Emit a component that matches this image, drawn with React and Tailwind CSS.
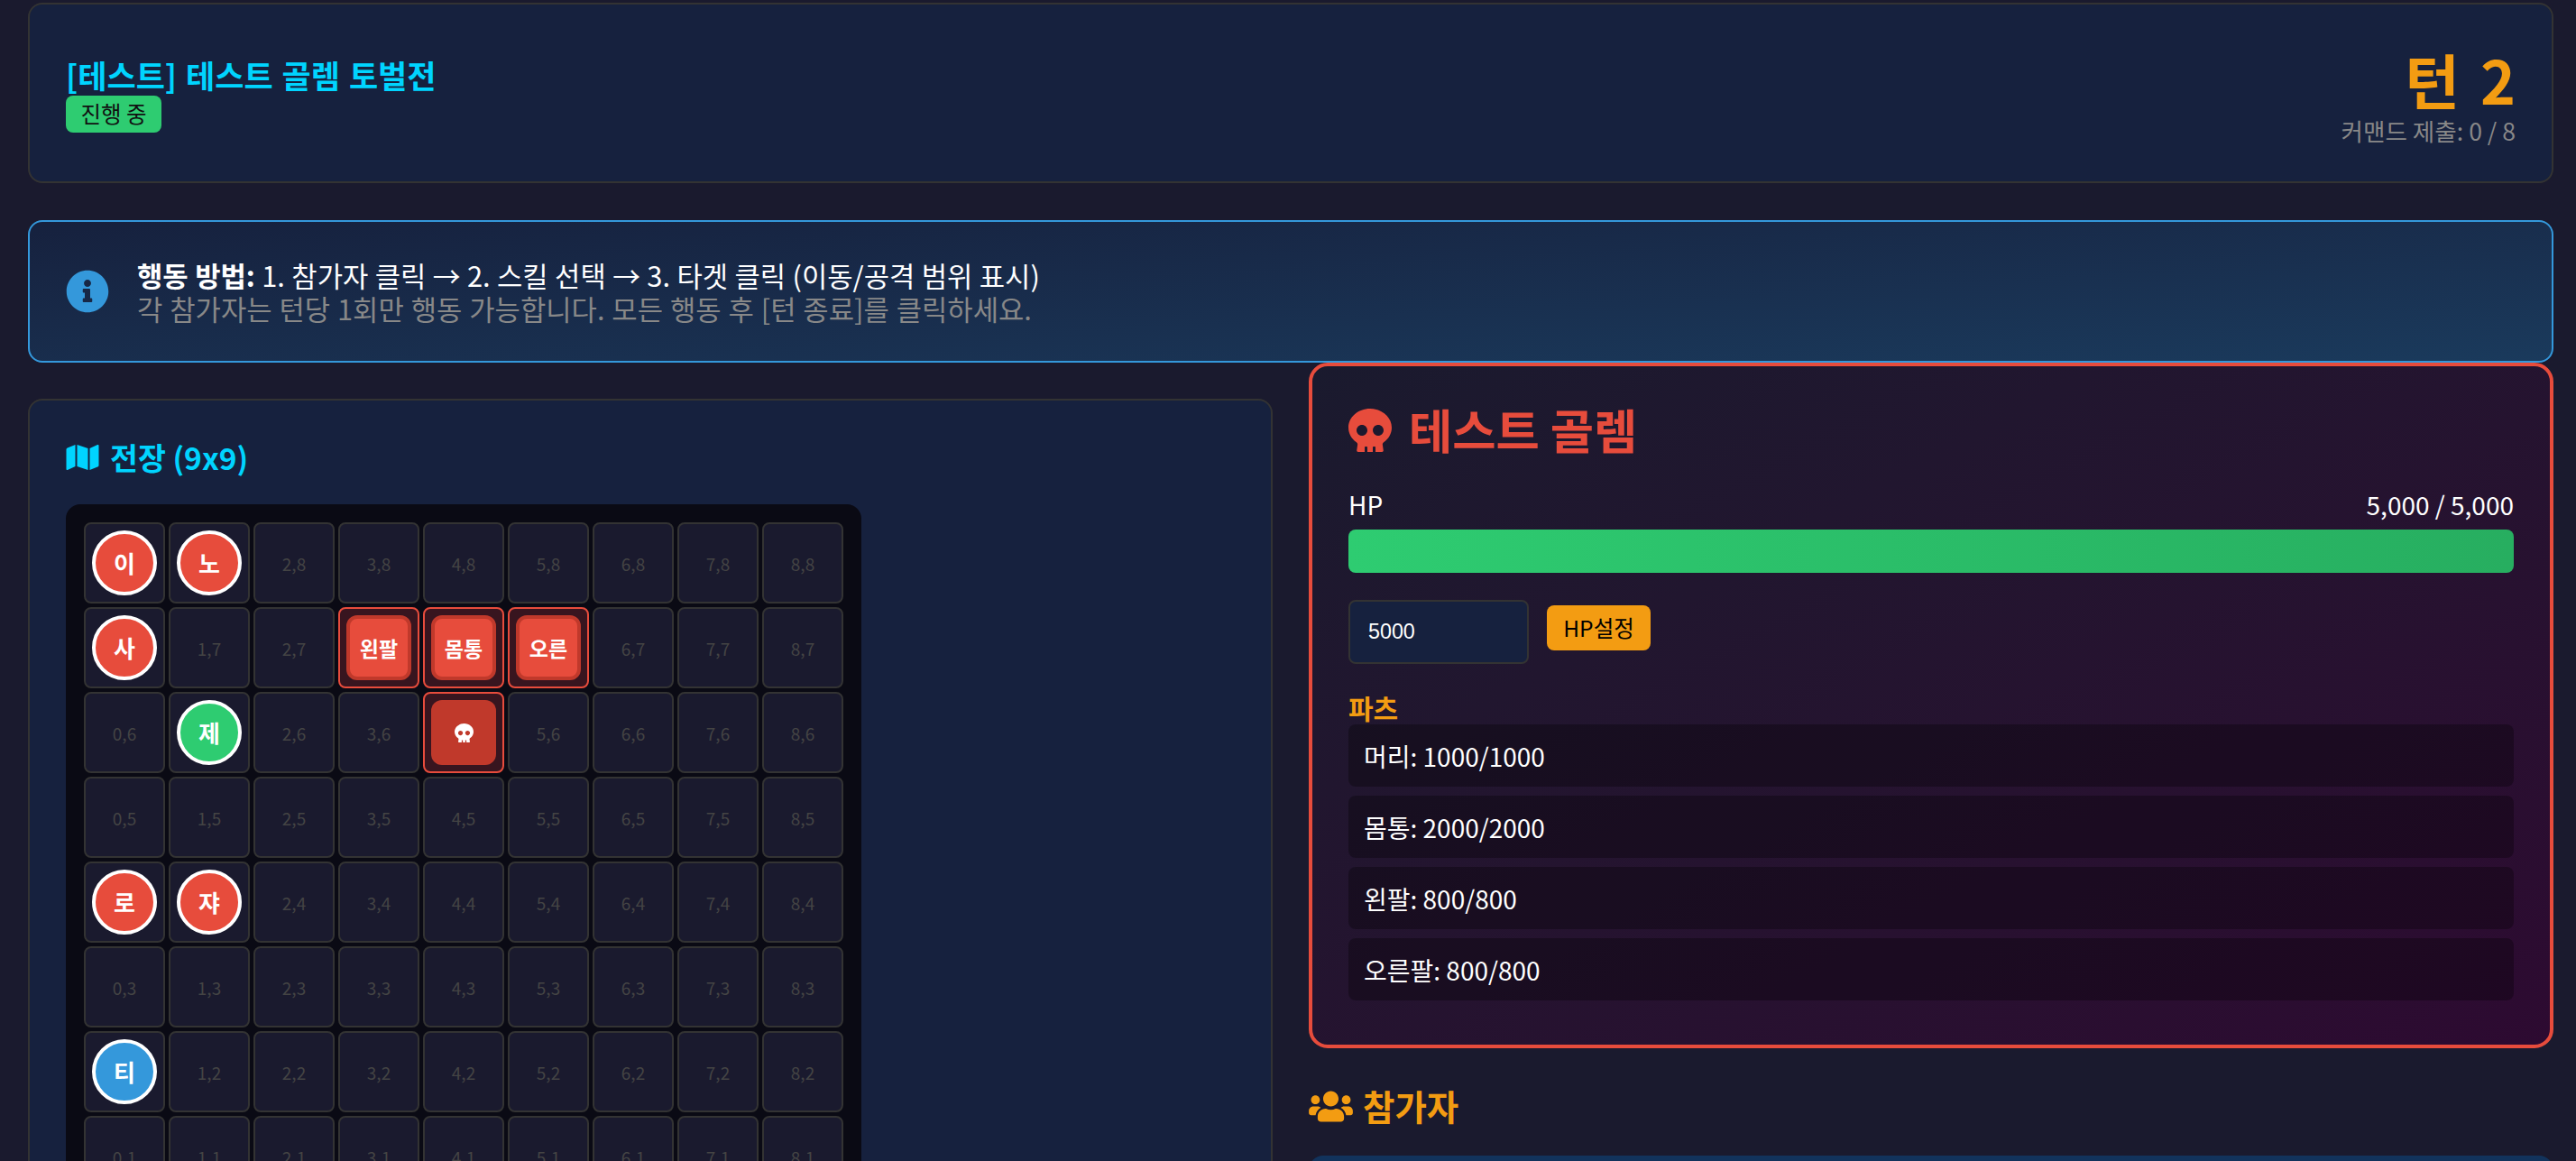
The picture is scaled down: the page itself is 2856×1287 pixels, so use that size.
import { FaInfoCircle, FaMap, FaSkull, FaUsers } from "react-icons/fa";

const FONT = "font-['Noto_Sans_CJK_KR','Noto_Sans',sans-serif]";

const tokens = {
  "0,8": { label: "이", color: "bg-[#e74c3c]" },
  "1,8": { label: "노", color: "bg-[#e74c3c]" },
  "0,7": { label: "사", color: "bg-[#e74c3c]" },
  "1,6": { label: "제", color: "bg-[#2ecc71]" },
  "0,4": { label: "로", color: "bg-[#e74c3c]" },
  "1,4": { label: "쟈", color: "bg-[#e74c3c]" },
  "0,2": { label: "티", color: "bg-[#3498db]" },
};

const bossParts = { "3,7": "왼팔", "4,7": "몸통", "5,7": "오른" };

const partRows = ["머리: 1000/1000", "몸통: 2000/2000", "왼팔: 800/800", "오른팔: 800/800"];

function Cell({ x, y }) {
  const key = `${x},${y}`;
  const token = tokens[key];
  const part = bossParts[key];
  const isHead = key === "4,6";
  const isBoss = part || isHead;

  return (
    <div
      className={`flex h-[90px] w-[90px] items-center justify-center rounded-lg border-2 ${
        isBoss ? "border-[#e74c3c] bg-[#38151f]" : "border-[#333] bg-[#1a1a2e]"
      }`}
    >
      {token && (
        <div
          className={`flex h-[72px] w-[72px] items-center justify-center rounded-full border-4 border-white text-[26px] font-bold leading-none text-white ${token.color}`}
        >
          {token.label}
        </div>
      )}
      {part && (
        <div className="flex h-[72px] w-[72px] items-center justify-center rounded-xl border-4 border-[#c0392b] bg-[#e74c3c] text-[23px] font-bold leading-none text-white">
          {part}
        </div>
      )}
      {isHead && (
        <div className="flex h-[72px] w-[72px] items-center justify-center rounded-xl bg-[#c0392b] text-white">
          <FaSkull size={21} />
        </div>
      )}
      {!isBoss && !token && <span className="text-[19px] leading-none text-[#444]">{key}</span>}
    </div>
  );
}

export default function App() {
  const rows = [8, 7, 6, 5, 4, 3, 2, 1, 0];
  const cols = [0, 1, 2, 3, 4, 5, 6, 7, 8];

  return (
    <div className={`h-[1287px] overflow-hidden bg-[#1a1a2e] pl-[31px] pr-[25px] pt-[3px] text-white ${FONT}`}>
      {/* header */}
      <div className="mb-[41px] flex items-center justify-between rounded-2xl border-2 border-[#333] bg-[#16213e] px-[40px] py-[40px]">
        <div>
          <h1 className="text-[35px] font-bold leading-[47px] text-[#00d4ff] [word-spacing:2px]">[테스트] 테스트 골렘 토벌전</h1>
          <span className="inline-flex h-[41px] w-[106px] items-center justify-center rounded-lg bg-[#2ecc71] text-[24.5px] text-[#111]">
            진행 중
          </span>
        </div>
        <div className="text-right">
          <div className="text-[66px] font-bold leading-[84px] text-[#f39c12] [word-spacing:8px]">턴 2</div>
          <div className="text-[26.6px] leading-[32px] text-[#888]">커맨드 제출: 0 / 8</div>
        </div>
      </div>

      {/* info box */}
      <div className="mb-[40px] flex items-center gap-[31px] rounded-2xl border-2 border-[#3498db] bg-gradient-to-br from-[#16213e] to-[#1a3a5c] p-[40px]">
        <FaInfoCircle size={48} className="shrink-0 text-[#3498db]" />
        <div className="text-[30.8px] leading-[37px]">
          <div className="[word-spacing:0.5px]">
            <strong className="font-bold">행동 방법:</strong> 1. 참가자 클릭 → 2. 스킬 선택 → 3. 타겟 클릭 (이동/공격 범위 표시)
          </div>
          <div className="text-[#888] [word-spacing:1px]">각 참가자는 턴당 1회만 행동 가능합니다. 모든 행동 후 [턴 종료]를 클릭하세요.</div>
        </div>
      </div>

      <div className="flex items-start gap-[40px]">
        {/* battlefield */}
        <div className="w-[1380px] shrink-0 rounded-2xl border-2 border-[#333] bg-[#16213e] p-[40px]">
          <h3 className="mb-[30px] flex items-center gap-[12px] text-[33.6px] font-bold leading-[45px] text-[#00d4ff]">
            <FaMap className="h-[32px] w-[37px]" />
            <span>전장 (9x9)</span>
          </h3>
          <div className="inline-block rounded-2xl bg-[#0a0a14] p-[20px]">
            <div className="grid grid-cols-[repeat(9,90px)] gap-[4px]">
              {rows.map((y) => cols.map((x) => <Cell key={`${x}-${y}`} x={x} y={y} />))}
            </div>
          </div>
        </div>

        {/* right column */}
        <div className="-mt-[40px] min-w-0 flex-1">
          <div className="rounded-[21px] border-4 border-[#e74c3c] bg-gradient-to-br from-[#1a1a2e] to-[#2d0a31] px-[40px] pb-[39px] pt-[40px]">
            <h2 className="mb-[33px] flex items-center gap-[19px] text-[52.5px] font-bold leading-[65px] text-[#e74c3c]">
              <FaSkull size={48} />
              <span className="-mt-[3px]">테스트 골렘</span>
            </h2>
            <div className="mb-[9px] flex justify-between text-[28px] leading-[37px]">
              <span>HP</span>
              <span>5,000 / 5,000</span>
            </div>
            <div className="h-[48px] rounded-lg bg-gradient-to-r from-[#2ecc71] to-[#27ae60]" />
            <div className="mt-[30px] flex items-start gap-[20px]">
              <input
                readOnly
                value="5000"
                className="h-[71px] w-[200px] rounded-lg border-2 border-[#333] bg-[#16213e] px-[20px] font-['Liberation_Sans',sans-serif] text-[23.3px] text-white outline-none"
              />
              <button className="mt-[6px] h-[50px] w-[115px] rounded-lg bg-[#f39c12] text-[24.5px] text-black">HP설정</button>
            </div>
            <div className="mt-[30px] text-[30px] font-bold leading-[37px] text-[#f39c12]">파츠</div>
            <div className="flex flex-col gap-[10px]">
              {partRows.map((row) => (
                <div key={row} className="flex h-[69px] items-center rounded-lg bg-black/30 px-[17px] text-[28px]">
                  {row}
                </div>
              ))}
            </div>
            <div className="h-[10px]" />
          </div>

          <h3 className="mb-[30px] mt-[40px] flex items-center gap-[11px] text-[38.5px] font-bold leading-[51px] text-[#f39c12]">
            <FaUsers className="h-[39px] w-[49px]" />
            <span className="-mt-[2px]">참가자</span>
          </h3>
          <div className="h-[120px] rounded-2xl bg-[#12335c]" />
        </div>
      </div>
    </div>
  );
}
